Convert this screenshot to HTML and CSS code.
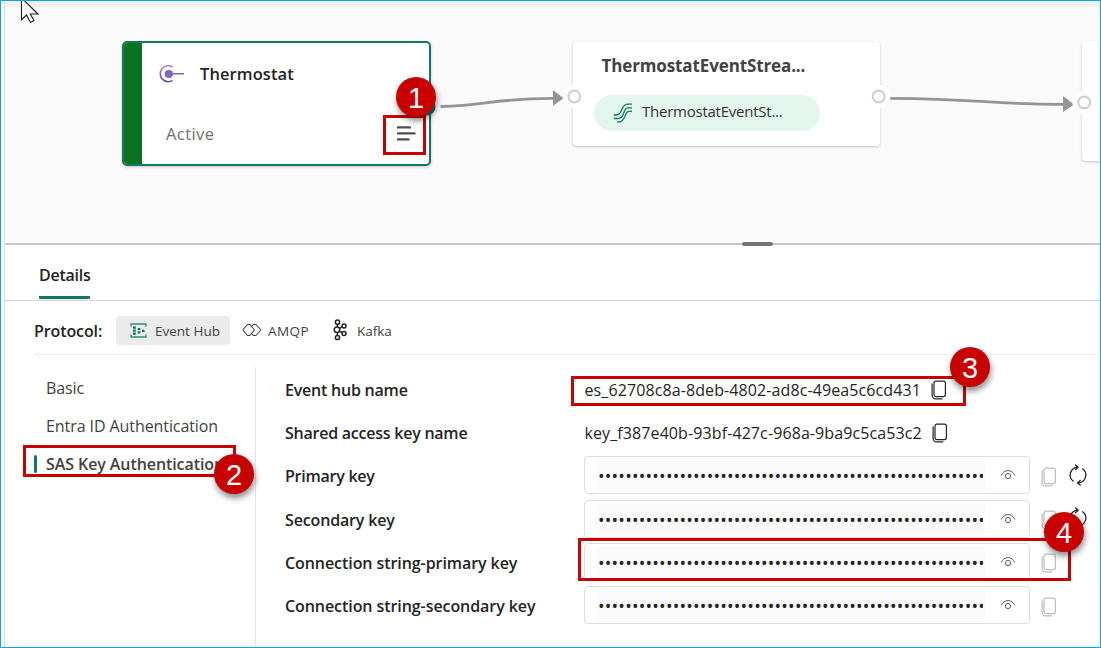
FILE: index.html
```html
<!DOCTYPE html>
<html lang="en">
<head>
<meta charset="utf-8">
<title>Eventstream details</title>
<link rel="stylesheet" href="styles.css">
</head>
<body>
<svg class="defs" width="0" height="0">
  <symbol id="copy" viewBox="0 0 16 20"><g fill="none" stroke="currentColor" stroke-width="1.2"><rect x="3" y="1.2" width="11.4" height="15.4" rx="2"/><path d="M1.1 3.6v11.6a3.7 3.7 0 0 0 3.7 3.7h6.6"/></g></symbol>
  <symbol id="eye" viewBox="0 0 16 12"><g fill="none" stroke="currentColor" stroke-width="1"><path d="M1.2 6.5C3.8-.1 12.2-.1 14.8 6.5"/><circle cx="8" cy="7" r="2.6"/></g></symbol>
  <symbol id="sync" viewBox="0 0 20 22"><g fill="none" stroke="currentColor" stroke-width="1.3" stroke-linecap="round" stroke-linejoin="round"><path d="M5 17A7.9 7.9 0 0 1 9.6 3.1M14.7 4.7A7.9 7.9 0 0 1 10.2 18.9"/><path d="M7.6 1l2.6 2.2-2.6 2.4M12.2 16.5l-2.6 2.4 2.6 2.2"/></g></symbol>
</svg>
<div class="app">
  <section class="canvas">
    <div class="node thermo">
      <div class="strip"></div>
      <svg class="source-icon" viewBox="0 0 26 20" width="26" height="20"><defs><linearGradient id="pg" x2="0" y2="1"><stop stop-color="#b07fe0"/><stop offset="1" stop-color="#6b45a8"/></linearGradient></defs><path d="M13.6 3A8 8 0 1 0 13.6 16.4" fill="none" stroke="url(#pg)" stroke-width="1.6"/><circle cx="9.8" cy="10" r="4.1" fill="#8661c5"/><path d="M13 9.7h12" stroke="#8661c5" stroke-width="1.5"/></svg>
      <span class="name">Thermostat</span>
      <span class="state">Active</span>
      <svg class="menu" viewBox="0 0 20 16" width="20" height="16"><path d="M2 2.4h12M2 8.4h16.5M2 14.4h10.5" stroke="#505050" stroke-width="2.4" stroke-linecap="round"/></svg>
    </div>
    <div class="node stream">
      <span class="stream-title">ThermostatEventStrea...</span>
      <div class="pill">
        <svg viewBox="0 0 20 20" width="20" height="20"><g fill="none" stroke="#117865" stroke-width="1.3"><path d="M19 1.2h-4.300C7 1.200 10.500 12 3.500 12H.8M19 4.800h-4C9.500 4.800 12.500 15.500 4.800 15.500H.8M19 8.400h-3C10.800 8.400 13.500 19 5.500 19H4.400"/></g></svg>
        <span class="pill-text">ThermostatEventSt...</span>
      </div>
    </div>
    <div class="node next"></div>
    <svg class="links" viewBox="0 0 1101 243" width="1101" height="243">
      <g fill="none" stroke="#969492" stroke-width="2.8"><path d="M440.500 106.500C487 106 493 98.300 553 98.300M890 98.400C980 98.800 990 104.400 1064 104.400"/></g>
      <path d="M553 90l10.500 8.300-10.500 7.500zM1063 96l11 8.400-11 7.600z" fill="#969492"/>
      <g fill="#fff"><circle cx="427" cy="107" r="8.500" fill="#117865"/><circle cx="574.500" cy="96.500" r="11.500"/><circle cx="879" cy="96.500" r="11.500"/><circle cx="1084" cy="102.500" r="11.500"/></g>
      <g fill="#fff" stroke="#d1d1d1" stroke-width="2.200"><circle cx="574.300" cy="96.500" r="5.900"/><circle cx="878.700" cy="96.500" r="5.900"/><circle cx="1084.200" cy="102.500" r="5.900"/></g>
    </svg>
  </section>
  <section class="panel">
    <div class="handle"></div>
    <div class="tabs"><div class="tab"><span class="t-details">Details</span></div></div>
    <div class="protocols">
      <span class="proto-label">Protocol:</span>
      <div class="proto selected">
        <svg viewBox="0 0 17 15" width="17" height="15"><path d="M1 3.500V1h15v2.500M1 11.500V14h15v-2.500" fill="none" stroke="#2f8f7e" stroke-width="1.300"/><path d="M3 3.600h2.800v2.200H3zM3 6.600h2.800v2.200H3zM3 9.600h2.800v2.200H3zM7.700 5h2.600v2.200H7.700zM7.700 8.200h2.600v2.200H7.700zM12 6.700h2.500v2.200H12z" fill="#117865"/></svg><span class="p1">Event Hub</span>
      </div>
      <div class="proto">
        <svg viewBox="0 0 20 14" width="20" height="14"><g fill="none" stroke="#424242" stroke-width="1.100" stroke-linejoin="round"><path d="M5.500 1.500h2.300L12.500 7l-4.700 5.500H5.500L.8 7z"/><path d="M9.500 3.600l1.800-2.100h2.600L19 7l-5.100 5.500h-2.600l-1.800-2.100"/></g></svg><span class="p2">AMQP</span>
      </div>
      <div class="proto">
        <svg class="kafka" viewBox="0 0 14 22" width="14" height="22"><g fill="none" stroke="#242424" stroke-width="1.500"><circle cx="4.500" cy="3.200" r="2.100"/><circle cx="4" cy="10.800" r="2.800"/><circle cx="4.500" cy="18.500" r="2.100"/><circle cx="11" cy="6.900" r="2"/><circle cx="11" cy="14.600" r="2"/><path d="M4.400 5.300v2.700M4.400 13.600v2.800M6.500 9.400l2.700-1.500M6.500 12.200l2.700 1.500"/></g></svg><span class="p3">Kafka</span>
      </div>
    </div>
    <div class="content">
      <nav class="side">
        <div class="item"><span class="s1">Basic</span></div>
        <div class="item"><span class="s2">Entra ID Authentication</span></div>
        <div class="item active"><span class="s3">SAS Key Authentication</span></div>
      </nav>
      <div class="fields">
        <div class="row"><div class="label l1">Event hub name</div><span class="value">es_62708c8a-8deb-4802-ad8c-49ea5c6cd431</span><svg class="copy after-value"><use href="#copy"/></svg></div>
        <div class="row"><div class="label l2">Shared access key name</div><span class="value">key_f387e40b-93bf-427c-968a-9ba9c5ca53c2</span><svg class="copy after-value"><use href="#copy"/></svg></div>
        <div class="row"><div class="label l3">Primary key</div><div class="input"><div class="dots">•••••••••••••••••••••••••••••••••••••••••••••••••••••••••</div><svg class="eye"><use href="#eye"/></svg></div><svg class="copy dim"><use href="#copy"/></svg><svg class="sync"><use href="#sync"/></svg></div>
        <div class="row"><div class="label l4">Secondary key</div><div class="input"><div class="dots">•••••••••••••••••••••••••••••••••••••••••••••••••••••••••</div><svg class="eye"><use href="#eye"/></svg></div><svg class="copy dim"><use href="#copy"/></svg><svg class="sync"><use href="#sync"/></svg></div>
        <div class="row"><div class="label l5">Connection string-primary key</div><div class="input"><div class="dots">•••••••••••••••••••••••••••••••••••••••••••••••••••••••••</div><svg class="eye"><use href="#eye"/></svg></div><svg class="copy dim"><use href="#copy"/></svg></div>
        <div class="row"><div class="label l6">Connection string-secondary key</div><div class="input"><div class="dots">•••••••••••••••••••••••••••••••••••••••••••••••••••••••••</div><svg class="eye"><use href="#eye"/></svg></div><svg class="copy dim"><use href="#copy"/></svg></div>
      </div>
    </div>
  </section>
  <div class="callout k1"></div><div class="callout k2"></div><div class="callout k3"></div><div class="callout k4"></div>
  <div class="badge b1">1</div><div class="badge b2">2</div><div class="badge b3">3</div><div class="badge b4">4</div>
  <svg class="cursor" viewBox="0 0 20 24" width="20" height="24"><path d="M1.500-2V19.700L6.500 15l4 7.500 3.500-2-3.800-6.500H18z" fill="#fff" stroke="#1a1a2a" stroke-width="1.100"/></svg>
  <div class="frame"></div>
</div>
</body>
</html>
```
FILE: styles.css
```css
* { box-sizing: border-box; }
body { margin: 0; font-family: "Open Sans", "Noto Sans", sans-serif; color: #242424; font-size: 16px; }
.defs { position: absolute; }
svg { display: block; flex: none; overflow: visible; }
span, .label { white-space: nowrap; }
.app { position: relative; width: 1101px; height: 648px; overflow: hidden; background: #fff; display: flex; flex-direction: column; padding-left: 4px; }
.frame { position: absolute; inset: 0; border: 1px solid #00a8ef; }

/* Diagram canvas */
.canvas { height: 242px; flex: none; background: #fafafa; border-top: 7px solid #f0f0f1; border-left: 1px solid #dcdcdc; }
.node { position: absolute; background: #fff; border-radius: 4px; box-shadow: 0 1px 3px rgba(0,0,0,.22); }
.thermo { left: 122px; top: 41px; width: 309px; height: 125px; border: 2px solid #117865; border-radius: 5px; overflow: hidden; }
.strip { width: 18px; height: 100%; background: #0b731f; }
.source-icon { position: absolute; left: 35px; top: 21px; }
.name, .state, .menu, .stream-title { position: absolute; line-height: 22px; }
.name { left: 76px; top: 20px; font-weight: 600; font-size: 16.500px; letter-spacing: .1px; }
.state { left: 42px; top: 80px; color: #707070; font-size: 16.500px; letter-spacing: .4px; }
.menu { left: 272px; top: 82px; }
.stream { left: 573px; top: 42px; width: 307px; height: 104px; }
.stream-title { left: 28.500px; top: 13px; font-weight: 700; font-size: 17px; color: #424242; letter-spacing: -.12px; }
.pill { margin: 53px 0 0 21px; width: 226px; height: 36px; border-radius: 18px; background: #e3f6ee; display: flex; align-items: center; gap: 9px; padding-left: 19px; color: #333; font-size: 15px; }
.pill-text { letter-spacing: -.24px; padding-bottom: 4px; }
.next { left: 1082px; top: 41px; width: 40px; height: 120px; }
.links { position: absolute; left: 0; top: 0; }

/* Details panel */
.panel { flex: 1; border-top: 2px solid #c8c8c8; border-left: 1px solid #dcdcdc; margin-top: 1px; }
.handle { width: 31px; height: 4px; margin: -3px 0 0 737px; border-radius: 2px; background: #757575; position: relative; }
.tabs { height: 55px; border-bottom: 1px solid #d6d6d6; padding-left: 34px; display: flex; }
.tab { width: 51px; height: 53px; border-bottom: 3px solid #117865; border-radius: 1px; display: flex; align-items: center; font-weight: 600; padding-top: 7px; }
.t-details { letter-spacing: -.25px; }
.protocols { height: 54px; margin-left: 29px; margin-right: 2px; border-bottom: 1px solid #ececec; display: flex; align-items: center; padding-top: 5px; }
.proto-label { width: 82px; font-weight: 600; padding-top: 2px; letter-spacing: -.1px; }
.proto { display: flex; align-items: center; height: 29px; font-size: 13.500px; color: #424242; border-radius: 4px; margin-right: 24px; gap: 6px; }
.proto span { padding-top: 2px; }
.p2 { letter-spacing: .4px; }
.selected { background: #ebebeb; width: 114px; margin-right: 12px; padding-left: 14px; gap: 8px; }
.kafka { margin-right: 4px; }
.content { display: flex; height: 294px; padding-top: 12px; }
.side { width: 251px; border-right: 1px solid #e6e6e6; padding: 2px 0 0 28px; }
.item { height: 38px; display: flex; align-items: center; padding-left: 13px; color: #424242; letter-spacing: -.08px; }
.item.active { font-weight: 600; position: relative; }
.item.active::before { content: ""; position: absolute; left: 1px; top: 10px; width: 3px; height: 18px; border-radius: 2px; background: #117865; }
.fields { padding: 1px 0 0 29px; }
.row { display: flex; align-items: center; height: 43.200px; }
.label { width: 299px; font-weight: 600; }
.l1 { letter-spacing: -.22px; }
.l2 { letter-spacing: -.24px; }
.l3 { letter-spacing: -.25px; }
.l4 { letter-spacing: -.15px; padding-top: 1px; }
.l5 { letter-spacing: -.07px; padding-top: 1px; }
.l6 { letter-spacing: -.07px; }
.value { letter-spacing: .1px; padding-left: .5px; }
.input { width: 446px; height: 38px; border: 1px solid #dedede; border-radius: 4px; display: flex; align-items: center; justify-content: space-between; padding: 0 13px 0 12px; margin-top: -1px; }
.dots { width: 388px; height: 30px; line-height: 32px; background: #fafafa; border-left: 1px solid #fafafa; border-right: 2px solid #fafafa; overflow: hidden; white-space: nowrap; font-size: 17.500px; letter-spacing: .21px; }
.eye { width: 16px; height: 12px; color: #606060; }
.copy { width: 16px; height: 20px; color: #242424; }
.dim { color: #bdbdbd; margin-left: 11px; margin-top: 2px; }
.sync { width: 20px; height: 22px; margin-left: 10.500px; margin-top: -2px; }
.after-value { margin-left: 10.500px; margin-top: 1px; }

/* Numbered callouts */
.callout { position: absolute; border: 3px solid #c80000; }
.k1 { left: 383px; top: 115px; width: 43px; height: 40px; }
.k2 { left: 23px; top: 445px; width: 213px; height: 32px; }
.k3 { left: 571px; top: 376px; width: 395px; height: 30px; }
.k4 { left: 578px; top: 538px; width: 493px; height: 43px; }
.badge { position: absolute; width: 40px; height: 40px; border-radius: 50%; background: #c80000; color: #fff; font: 29px/42px "Liberation Sans", sans-serif; text-align: center; box-shadow: 1px 4px 6px rgba(0,0,0,.45); }
.b1 { left: 396px; top: 77px; }
.b2 { left: 214px; top: 454px; }
.b3 { left: 950px; top: 347px; }
.b4 { left: 1044px; top: 512px; }
.cursor { position: absolute; left: 20px; top: 0; }
```
